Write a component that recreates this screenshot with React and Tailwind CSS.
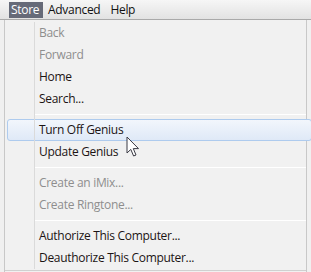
import React from 'react';

const groups = [
  [
    { label: 'Back', disabled: true },
    { label: 'Forward', disabled: true },
    { label: 'Home' },
    { label: 'Search...' },
  ],
  [
    { label: 'Turn Off Genius', active: true },
    { label: 'Update Genius' },
  ],
  [
    { label: 'Create an iMix...', disabled: true },
    { label: 'Create Ringtone...', disabled: true },
  ],
  [
    { label: 'Authorize This Computer...' },
    { label: 'Deauthorize This Computer...' },
  ],
];

function Cursor() {
  return (
    <svg className="absolute left-[126px] top-[136px]" width="14" height="22" viewBox="0 0 14 22">
      <path d="M1 1 L1 17 L4.8 13.4 L7.6 20 L10 19 L7.3 12.6 L12.5 12.6 Z" fill="#ffffff" stroke="#3a3a44" strokeWidth="1" strokeLinejoin="round" />
    </svg>
  );
}

export default function App() {
  return (
    <div className="relative w-[311px] h-[272px] overflow-hidden bg-[#f0f0f0] font-['Open_Sans',sans-serif] text-[12px] tracking-[-0.3px]">
      {/* menu bar */}
      <div className="h-[20px] flex items-center pl-[9px] bg-gradient-to-b from-[#f6f6f6] via-[#ececec] to-[#e2e2e2] border-b border-[#a9a9a9]">
        <div className="h-[16px] w-[34px] pl-[2px] flex items-center bg-[#666a78] text-white">Store</div>
        <div className="ml-[5px] h-[16px] flex items-center text-[#111]">Advanced</div>
        <div className="ml-[10px] h-[16px] flex items-center text-[#111]">Help</div>
      </div>

      {/* dropdown */}
      <div className="ml-[4px] w-[303px] border-l border-r border-[#c8c8c8] bg-[#f1f1f1] pt-[2px] pb-[1px]">
        {groups.map((g, gi) => (
          <div key={gi}>
            {gi > 0 && (
              <div className="relative h-[9px] flex items-center pl-[29px]">
                <div className="absolute left-[29px] top-0 bottom-0 w-[1px] bg-[#dadada]" />
                <div className="h-[1px] w-full bg-[#d6d6d6] border-b border-white" />
              </div>
            )}
            {g.map(it => (
              <div key={it.label} className="relative h-[22px] flex items-center">
                {it.active && (
                  <div className="absolute left-[2px] right-[-6px] top-0 bottom-0 rounded-[3px] border border-[#aecbee] bg-gradient-to-b from-[#f2f6fc] to-[#dfe9f7]" />
                )}
                <div className="absolute left-[29px] top-0 bottom-0 w-[1px] bg-[#dadada]" />
                <span className={`relative pl-[34px] font-medium ${it.disabled ? 'text-[#8e8e8e]' : 'text-[#1c1414]'}`}>{it.label}</span>
              </div>
            ))}
          </div>
        ))}
        <div className="h-[1px] bg-[#d0d0d0] mt-[1px]" />
      </div>
      <Cursor />
    </div>
  );
}
